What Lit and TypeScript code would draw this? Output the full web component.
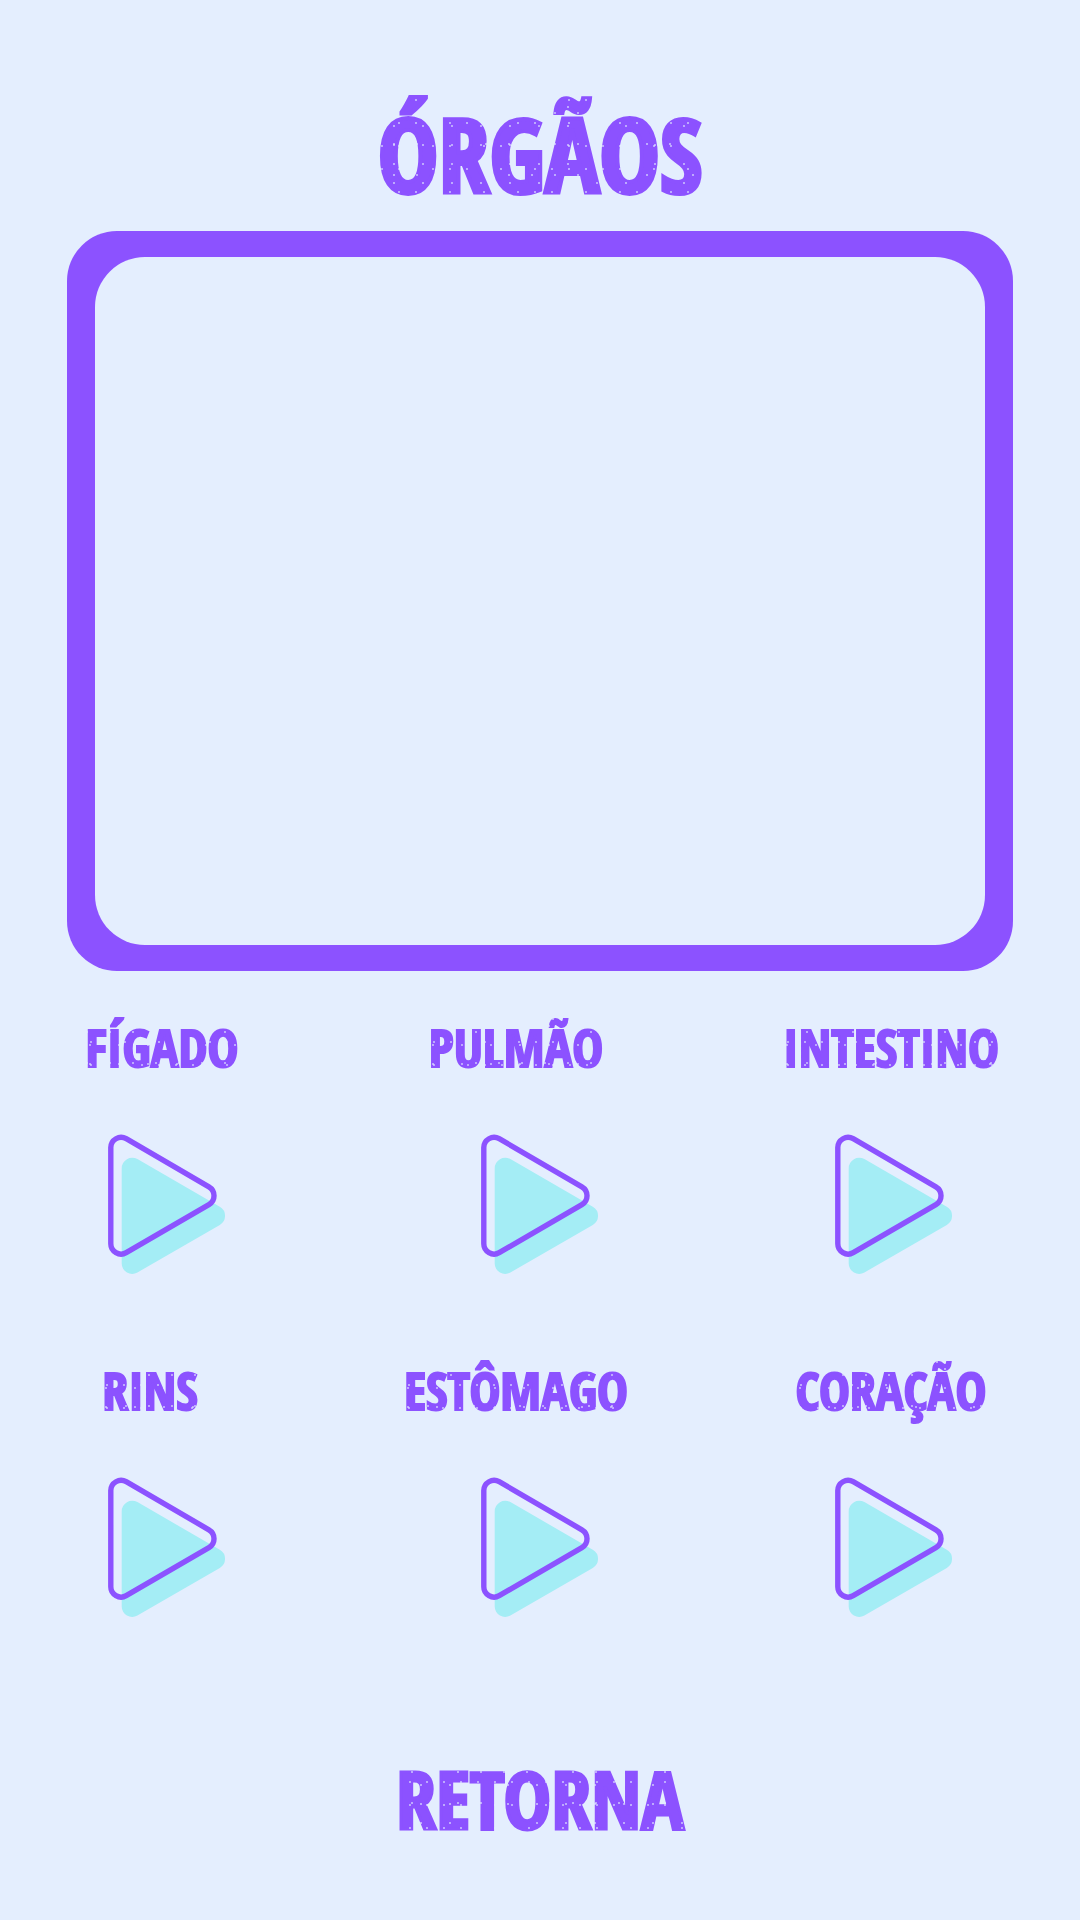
import { LitElement, html, css } from "lit";
import { customElement } from "lit/decorators.js";
import { classMap } from "lit/directives/class-map.js";

interface Organ {
  id: string;
  name: string;
  column: "left" | "middle" | "right";
}

const ORGANS: Organ[] = [
  { id: "figado", name: "FÍGADO", column: "left" },
  { id: "pulmao", name: "PULMÃO", column: "middle" },
  { id: "intestino", name: "INTESTINO", column: "right" },
  { id: "rins", name: "RINS", column: "left" },
  { id: "estomago", name: "ESTÔMAGO", column: "middle" },
  { id: "coracao", name: "CORAÇÃO", column: "right" },
];

@customElement("app-root")
export class AppRoot extends LitElement {
  static styles = css`
    :host {
      --purple: #8c52ff;
      --aqua: #a4edf5;
      --paper: #e4eefe;
      display: block;
      box-sizing: border-box;
      min-height: 100vh;
      padding: 94px 67px 75px;
      background: var(--paper);
      color: var(--purple);
      font-family: "Liberation Sans Narrow", "Open Sans Condensed", "Roboto Condensed", "DejaVu Sans Condensed", sans-serif;
      font-weight: 800;
      text-align: center;
    }
    button {
      border: 0;
      padding: 0;
      background: none;
      color: inherit;
      font: inherit;
      cursor: pointer;
    }
    /* Small worn specks in the lettering */
    .worn {
      -webkit-text-stroke: 2px var(--purple);
      mask-image: radial-gradient(circle at 9px 6px, rgb(0 0 0 / 0.3) 0.5px, #000 1.5px),
        radial-gradient(circle at 5px 19px, rgb(0 0 0 / 0.3) 0.5px, #000 1.5px),
        radial-gradient(circle at 8px 13px, rgb(0 0 0 / 0.3) 0.5px, #000 1.5px);
      mask-size: 17px 23px, 23px 31px, 29px 19px;
      mask-composite: intersect;
    }
    .title {
      margin: 0 0 17px;
      font-size: 102px;
      line-height: 120px;
      font-weight: 800;
      -webkit-text-stroke-width: 4px;
    }
    .frame {
      padding: 26px 28px;
      border-radius: 50px;
      background: var(--purple);
    }
    .screen {
      aspect-ratio: 890 / 688;
      border-radius: 50px;
      background: var(--paper);
    }
    .organs {
      display: grid;
      grid-template-columns: 190fr 518fr 232fr;
      row-gap: 81px;
      margin-top: 42px;
      padding-right: 6px;
    }
    .organ {
      display: flex;
      flex-direction: column;
      align-items: center;
      gap: 53px;
    }
    .name {
      margin: 0;
      padding: 0 4px;
      font-size: 52px;
      line-height: 68px;
      font-weight: 800;
      white-space: nowrap;
    }
    .left .play {
      padding-left: 10px;
    }
    .middle .play {
      padding-left: 48px;
    }
    .right .play {
      padding-left: 6px;
    }
    .short .name {
      padding-right: 28px;
    }
    .icon {
      display: block;
      width: 118px;
      height: 141px;
    }
    .shade {
      fill: var(--aqua);
    }
    .outline {
      fill: none;
      stroke: var(--purple);
      stroke-width: 5.4;
    }
    .back {
      margin-top: 135px;
      padding: 0 12px;
      font-size: 80px;
      line-height: 90px;
      -webkit-text-stroke-width: 3px;
    }
  `;

  private renderOrgan(organ: Organ) {
    const classes = {
      organ: true,
      [organ.column]: true,
      short: organ.name.length < 5,
    };
    return html`
      <article class=${classMap(classes)}>
        <h2 class="name worn" id=${organ.id}>${organ.name}</h2>
        <button class="play" type="button" aria-labelledby=${organ.id}>
          <svg class="icon" viewBox="0 0 118 141" aria-hidden="true">
            <path
              class="shade"
              d="M13.7 34.2A10.5 10.5 0 0 1 29.4 25.1L111.8 72.7A10.5 10.5 0 0 1 111.8 90.9L29.4 138.5A10.5 10.5 0 0 1 13.7 129.4Z"
            />
            <path
              class="outline"
              d="M2.8 13.6A10.3 10.3 0 0 1 18.2 4.7L100.9 52.8A10.3 10.3 0 0 1 100.9 70.6L18.2 118.7A10.3 10.3 0 0 1 2.8 109.8Z"
            />
          </svg>
        </button>
      </article>
    `;
  }

  render() {
    return html`
      <main>
        <h1 class="title worn">ÓRGÃOS</h1>
        <div class="frame"><div class="screen"></div></div>
        <section class="organs">${ORGANS.map((o) => this.renderOrgan(o))}</section>
        <button class="back worn" type="button">RETORNA</button>
      </main>
    `;
  }
}
